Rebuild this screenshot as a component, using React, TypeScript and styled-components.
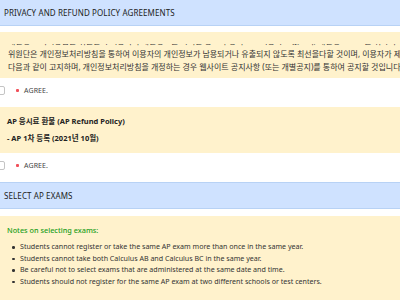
import React from 'react';
import styled, { createGlobalStyle } from 'styled-components';

const Global = createGlobalStyle`
  html, body { margin: 0; padding: 0; background: #fff; overflow: hidden; }
  body { font-family: "Noto Sans", "Noto Sans CJK KR", sans-serif; color: #333; }
`;

const Page = styled.div`
  width: 400px;
  height: 300px;
  overflow: hidden;
  display: flex;
  flex-direction: column;
`;

const SectionHeader = styled.div<{ $top: number }>`
  margin: ${(p) => p.$top}px -1px 0 -1px;
  height: 25px;
  flex: none;
  border: 1px solid #b8d2f5;
  background: #cfe2ff;
  display: flex;
  align-items: center;
  padding-left: 4px;
  font-size: 8px;
  color: #222;
  letter-spacing: 0.1px;
`;

const NoteBox = styled.div<{ $top: number }>`
  margin-top: ${(p) => p.$top}px;
  background: #fff2cc;
  flex: none;
`;

const PolicyBox = styled(NoteBox)`
  height: 46px;
  box-sizing: border-box;
  padding: 12px 0 0 8px;
`;

const ScrollArea = styled.div`
  height: 29px;
  overflow: hidden;
  white-space: nowrap;
`;

const ScrollContent = styled.div<{ $offset: number }>`
  margin-top: -${(p) => p.$offset}px;
  font-size: 8px;
  line-height: 13px;
  color: #333;
`;

const RefundBox = styled(NoteBox)`
  height: 46px;
  box-sizing: border-box;
  padding: 8px 0 0 7px;
  display: flex;
  flex-direction: column;
  gap: 4px;
`;

const BoldLine = styled.div`
  font-size: 7.5px;
  font-weight: 700;
  line-height: 13px;
  color: #222;
`;

const AgreeRow = styled.label`
  display: flex;
  align-items: center;
  height: 12px;
  padding: 6px 0 11px 0;
  flex: none;
  font-size: 7px;
  color: #444;
`;

const Checkbox = styled.span`
  width: 9px;
  height: 9px;
  box-sizing: border-box;
  border: 1px solid #c4c4c4;
  border-radius: 2px;
  background: #fff;
  margin-left: -4px;
`;

const Required = styled.span`
  width: 3px;
  height: 3px;
  border-radius: 1px;
  background: #f0505a;
  margin-left: 11px;
`;

const AgreeText = styled.span`
  margin-left: 5px;
  letter-spacing: 0.1px;
`;

const ExamBox = styled(NoteBox)`
  padding: 8px 0 0 7px;
  flex: 1;
`;

const NotesTitle = styled.div`
  font-size: 7.3px;
  line-height: 12px;
  color: #1b9e1b;
  font-weight: 500;
`;

const NotesList = styled.ul`
  margin: 5px 0 0 0;
  padding: 0 0 0 13px;
  list-style: none;
`;

const NotesItem = styled.li`
  position: relative;
  font-size: 7.1px;
  line-height: 11.5px;
  color: #333;
  &::before {
    content: '';
    position: absolute;
    left: -8px;
    top: 5px;
    width: 2.5px;
    height: 2.5px;
    border-radius: 50%;
    background: #333;
  }
`;

function Agree() {
  return (
    <AgreeRow>
      <Checkbox />
      <Required />
      <AgreeText>AGREE.</AgreeText>
    </AgreeRow>
  );
}

export default function App() {
  return (
    <>
      <Global />
      <Page>
        <SectionHeader $top={-1}>PRIVACY AND REFUND POLICY AGREEMENTS</SectionHeader>
        <PolicyBox $top={6}>
          <ScrollArea>
            <ScrollContent $offset={10.5}>
              <div>개인정보 처리방침은 위원단이 이용자의 개인정보를 어떠한 용도와 방식으로 이용하고 있으며, 개인정보 보호를 위하여 어떠한 조치를 취하고 있는지 알려드립니다.</div>
              <div>위원단은 개인정보처리방침을 통하여 이용자의 개인정보가 남용되거나 유출되지 않도록 최선을다할 것이며, 이용자가 제공한 개인정보를 보호합니다.</div>
              <div>다음과 같이 고지하며, 개인정보처리방침을 개정하는 경우 웹사이트 공지사항 (또는 개별공지)를 통하여 공지할 것입니다.</div>
            </ScrollContent>
          </ScrollArea>
        </PolicyBox>
        <Agree />
        <RefundBox $top={0}>
          <BoldLine>AP 응시료 환불 (AP Refund Policy)</BoldLine>
          <BoldLine>- AP 1차 등록 (2021년 10월)</BoldLine>
        </RefundBox>
        <Agree />
        <SectionHeader $top={0}>SELECT AP EXAMS</SectionHeader>
        <ExamBox $top={7}>
          <NotesTitle>Notes on selecting exams:</NotesTitle>
          <NotesList>
            <NotesItem>Students cannot register or take the same AP exam more than once in the same year.</NotesItem>
            <NotesItem>Students cannot take both Calculus AB and Calculus BC in the same year.</NotesItem>
            <NotesItem>Be careful not to select exams that are administered at the same date and time.</NotesItem>
            <NotesItem>Students should not register for the same AP exam at two different schools or test centers.</NotesItem>
          </NotesList>
        </ExamBox>
      </Page>
    </>
  );
}
